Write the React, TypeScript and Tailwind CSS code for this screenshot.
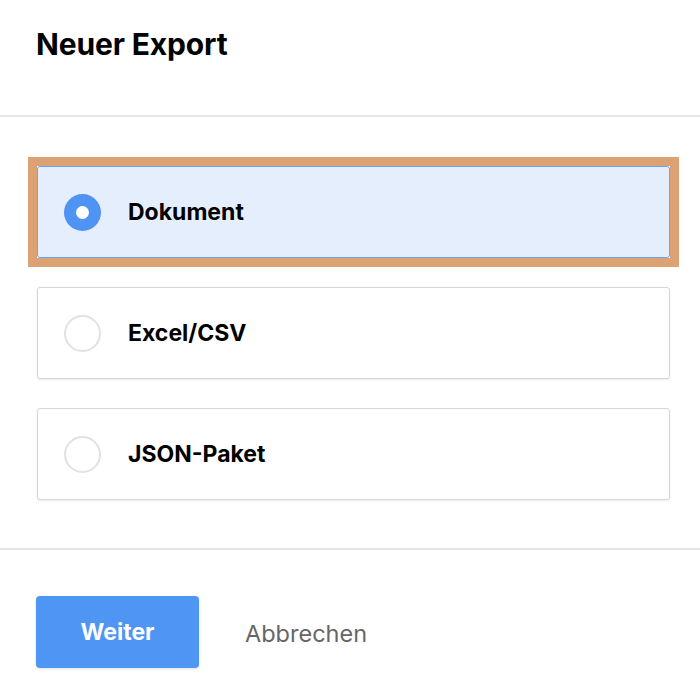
import { useState } from 'react';

const options = ['Dokument', 'Excel/CSV', 'JSON-Paket'];

const Radio = ({ checked }: { checked: boolean }) =>
  checked ? (
    <span className="flex h-[37px] w-[37px] shrink-0 items-center justify-center rounded-full bg-[#4f94f5]">
      <span className="h-[13px] w-[13px] rounded-full bg-white" />
    </span>
  ) : (
    <span className="h-[37px] w-[37px] shrink-0 rounded-full border-2 border-[#e2e2e2] bg-white" />
  );

export default function App() {
  const [selected, setSelected] = useState(0);

  return (
    <div className="h-[690px] w-[700px] bg-white font-['Inter',sans-serif] text-black">
      <header className="h-[117px] border-b-2 border-[#e6e6e6] px-9 pt-[26px]">
        <h1 className="text-[30px] leading-[36px] font-bold tracking-[-0.15px]">Neuer Export</h1>
      </header>

      <div className="flex flex-col gap-[29px] pb-[48px] pl-[37px] pr-[30px] pt-[49px]">
        {options.map((label, i) => (
          <button
            key={label}
            onClick={() => setSelected(i)}
            className={`relative flex h-[92px] items-center gap-[27px] rounded-[3px] border px-[26px] text-left ${
              selected === i
                ? "border-[#6aa5f7] bg-[#e5eefd] before:absolute before:-inset-[10px] before:border-[9px] before:border-[#dca274] before:content-['']"
                : 'border-[#d6d6d6] bg-white shadow-[0_1px_2px_rgba(0,0,0,0.08)]'
            }`}
          >
            <Radio checked={selected === i} />
            <span className="text-[23px] font-bold">{label}</span>
          </button>
        ))}
      </div>

      <footer className="flex items-center gap-[46px] border-t-2 border-[#e6e6e6] px-9 pt-[46px]">
        <button className="h-[72px] w-[163px] rounded-[4px] bg-[#4f95f3] text-[23px] font-bold text-white shadow-[0_1px_3px_rgba(0,0,0,0.12)]">
          Weiter
        </button>
        <button className="pt-[3px] text-[23.5px] text-[#666666]">Abbrechen</button>
      </footer>
    </div>
  );
}
